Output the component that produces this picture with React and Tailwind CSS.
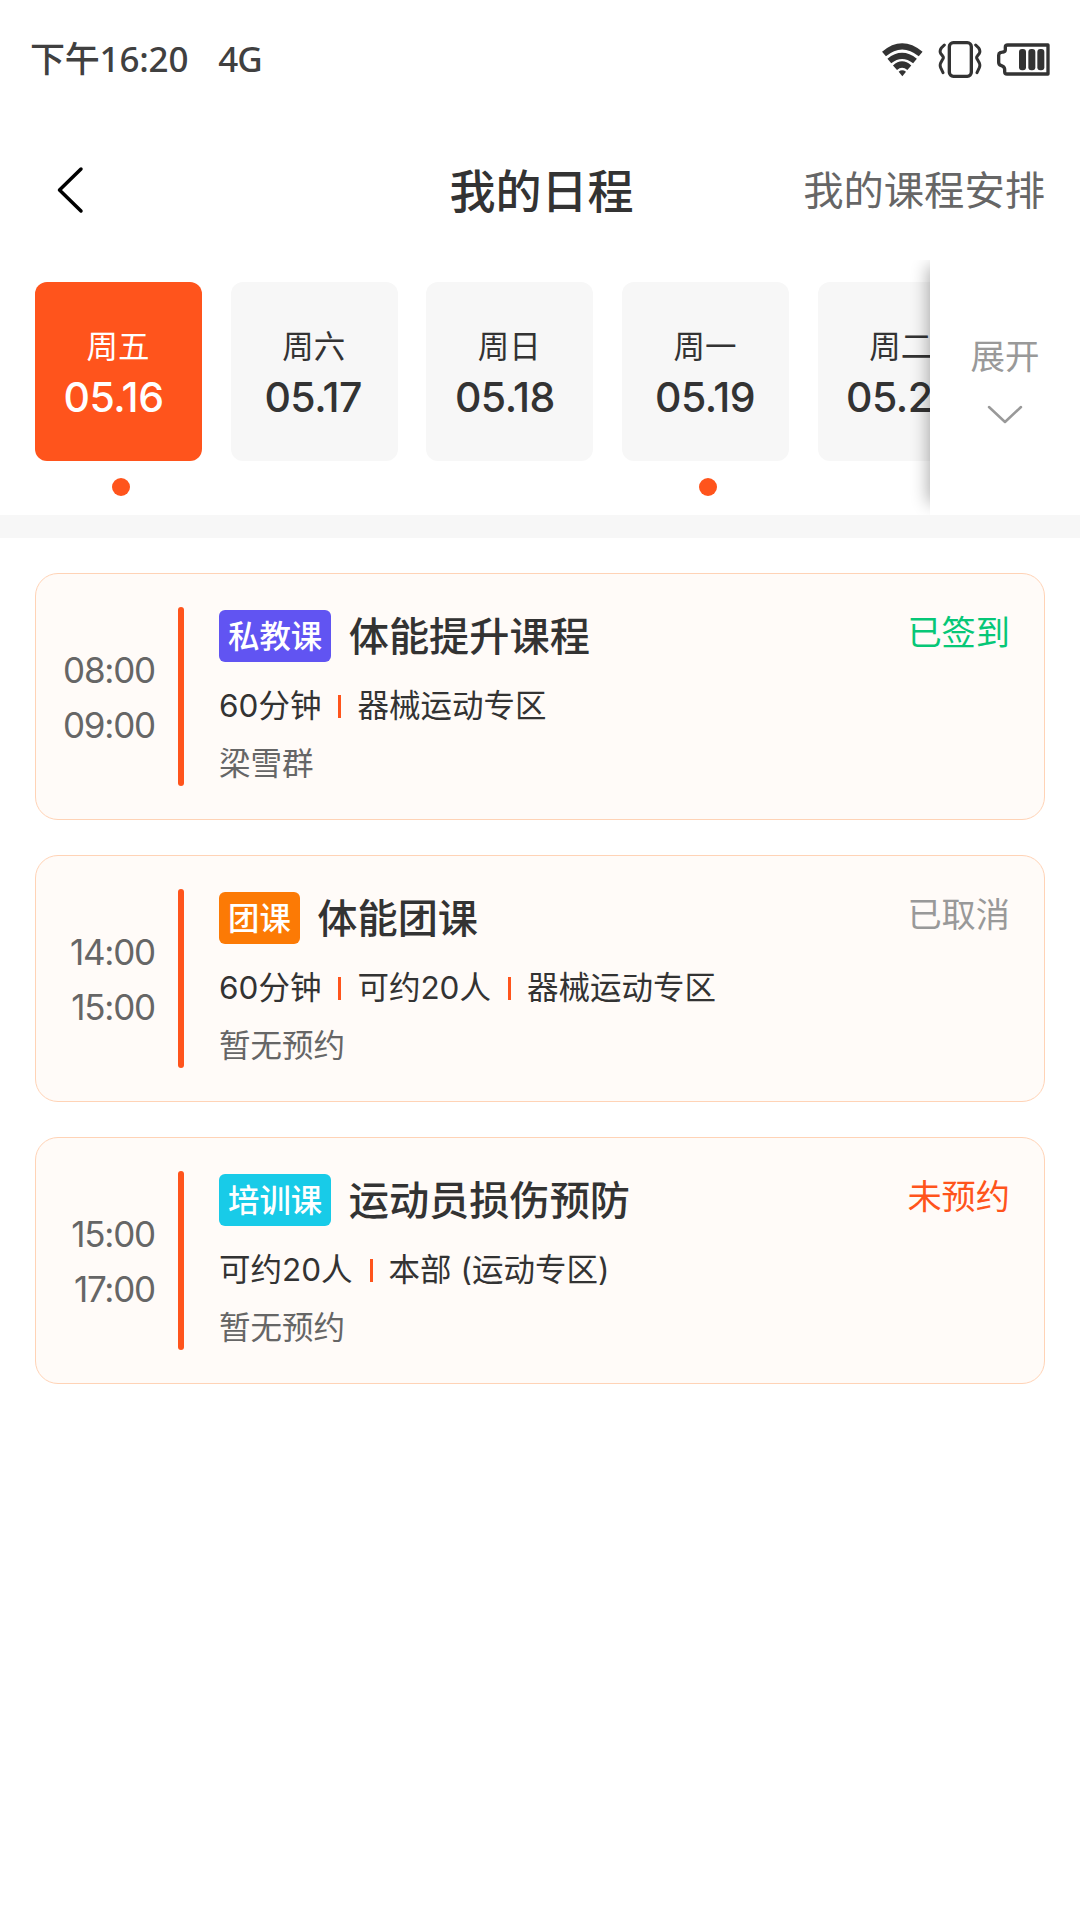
import React, { useState } from 'react';
import clsx from 'clsx';

const days = [
    { week: '周五', date: '05.16', dot: true, dateClass: 'pr-2.5' },
    { week: '周六', date: '05.17', dot: false, dateClass: 'pr-0.5' },
    { week: '周日', date: '05.18', dot: false, dateClass: 'pr-2.5' },
    { week: '周一', date: '05.19', dot: true, dateClass: 'pr-px' },
    { week: '周二', date: '05.20', dot: false, dateClass: 'pl-0.5' },
];

const courses = [
    {
        start: '08:00',
        end: '09:00',
        tag: '私教课',
        tagClass: 'bg-[#6154f2]',
        title: '体能提升课程',
        info: ['60分钟', '器械运动专区'],
        member: '梁雪群',
        status: '已签到',
        statusClass: 'text-[#07c777]',
    },
    {
        start: '14:00',
        end: '15:00',
        tag: '团课',
        tagClass: 'bg-[#fc7a05]',
        title: '体能团课',
        info: ['60分钟', '可约20人', '器械运动专区'],
        member: '暂无预约',
        status: '已取消',
        statusClass: 'text-[#999999]',
    },
    {
        start: '15:00',
        end: '17:00',
        tag: '培训课',
        tagClass: 'bg-[#18cbe8]',
        title: '运动员损伤预防',
        info: ['可约20人', '本部 (运动专区)'],
        member: '暂无预约',
        status: '未预约',
        statusClass: 'text-[#ff541c]',
    },
];

function WifiIcon() {
    return (
        <svg width="41" height="34" viewBox="0 0 123 102" fill="none" stroke="#333" strokeWidth="18">
            <path d="M6 33 Q60 -13 116 33" />
            <path d="M22 54 Q60 23 99 54" />
            <path d="M39 74 Q60 55 82 74" />
            <path d="M50 86 Q60 78 72 86 L61 100 Z" fill="#333" stroke="none" />
        </svg>
    );
}

function VibrateIcon() {
    return (
        <svg width="44" height="37" viewBox="0 0 132 111" fill="none" stroke="#333" strokeWidth="9" strokeLinecap="round">
            <rect x="34" y="5" width="66" height="101" rx="12" strokeWidth="10" />
            <path d="M19 12 L10 21 Q4 29 8 37 L14 45 Q18 50 14 55 L8 66 Q5 73 8 80 L15 95" />
            <path d="M113 12 L122 21 Q128 29 124 37 L118 45 Q114 50 118 55 L124 66 Q127 73 124 80 L117 95" />
        </svg>
    );
}

function BatteryIcon() {
    return (
        <svg width="53" height="33" viewBox="0 0 159 99" fill="none" stroke="#333" strokeWidth="10" strokeLinejoin="round">
            <path d="M153 6 H32 Q25 6 25 12 V20 Q25 26 18 27 L10 29 Q5 31 5 37 V58 Q5 65 11 67 L17 70 Q23 73 23 80 V86 Q23 93 30 93 H153 Z" />
            <g fill="#333" stroke="none">
                <rect x="66" y="18" width="21" height="64" rx="9" />
                <rect x="94" y="18" width="21" height="64" rx="9" />
                <rect x="121" y="18" width="21" height="64" rx="9" />
            </g>
        </svg>
    );
}

function StatusBar() {
    return (
        <div className="flex h-[119px] items-center justify-between pl-[30px] pr-[30px] font-['Noto_Sans','Noto_Sans_CJK_SC',sans-serif] text-[35px] leading-none font-medium text-[#404040]">
            <div className="flex gap-[30px] pb-[3px]">
                <span className="tracking-[-0.2px]">下午16:20</span>
                <span className="tracking-[-1px]">4G</span>
            </div>
            <div className="flex items-center gap-[15px]">
                <WifiIcon />
                <VibrateIcon />
                <BatteryIcon />
            </div>
        </div>
    );
}

function CourseCard({ course }) {
    return (
        <div className="flex h-[247px] rounded-[23px] border border-[#ffd3b6] bg-[#fffbf8] pt-[33px] pr-[34px]">
            {/* Time range */}
            <div className="flex w-[119px] flex-col items-end pt-[36px] text-[35px] leading-[55px] tracking-[-1.2px] text-[#666666]">
                <span>{course.start}</span>
                <span>{course.end}</span>
            </div>
            <div className="ml-[23px] h-[179px] w-1.5 rounded-full bg-[#ff541c]" />

            {/* Course info */}
            <div className="ml-[35px] flex-1 pt-[3px]">
                <div className="flex h-[52px] items-center">
                    <span className={clsx('flex h-[52px] items-center rounded-[6px] px-[9px] pt-[3px] text-[31.4px] font-medium text-white', course.tagClass)}>
                        {course.tag}
                    </span>
                    <span className="ml-[17.5px] pt-0.5 text-[40.2px] leading-[52px] font-medium text-[#333333]">{course.title}</span>
                </div>
                <div className="mt-[22px] flex h-[44px] items-center text-[31.5px] leading-[44px] text-[#333333]">
                    {course.info.map((text, i) => (
                        <React.Fragment key={text}>
                            {i > 0 && <span className="mr-[16px] ml-[17px] h-[23px] w-[3px] bg-[#ff541c]" />}
                            <span>{text}</span>
                        </React.Fragment>
                    ))}
                </div>
                <div className="mt-[14px] text-[31.5px] leading-[44px] text-[#666666]">{course.member}</div>
            </div>

            <div className={clsx('pt-px text-[34.2px] leading-[50px]', course.statusClass)}>{course.status}</div>
        </div>
    );
}

export default function App() {
    const [active, setActive] = useState(0);

    return (
        <div className="h-[1920px] w-[1080px] overflow-hidden bg-white font-['Inter','Noto_Sans_CJK_SC',sans-serif]">
            <StatusBar />

            {/* Header */}
            <header className="grid h-[141px] grid-cols-[1fr_auto_1fr] items-center pt-px pl-[56px] pr-[35px]">
                <svg width="30" height="48" viewBox="0 0 30 48" fill="none" stroke="#000" strokeWidth="3.5" strokeLinecap="round" strokeLinejoin="round">
                    <path d="M25 3 L3.5 24 L25 45" />
                </svg>
                <h1 className="pt-0.5 pr-[18px] text-[46px] leading-none font-medium text-[#333333]">我的日程</h1>
                <span className="pt-0.5 text-right text-[40.3px] leading-none text-[#666666]">我的课程安排</span>
            </header>

            {/* Day picker */}
            <div className="flex h-[255px] overflow-hidden">
                <div className="flex w-[930px] gap-[28.7px] overflow-hidden pt-[22px] pl-[35px]">
                    {days.map((day, i) => (
                        <div key={day.date} className="flex shrink-0 flex-col items-center">
                            <button
                                type="button"
                                onClick={() => setActive(i)}
                                className={clsx(
                                    'flex h-[179px] w-[167px] flex-col items-center rounded-[12px] pt-[39px]',
                                    active === i ? 'bg-[#ff541c] text-white' : 'bg-[#f7f7f7] text-[#333333]'
                                )}
                            >
                                <span className="pr-px text-[31.5px] leading-[51px]">{day.week}</span>
                                <span className={clsx('text-[41px] leading-[51px] font-medium tracking-[-0.5px]', day.dateClass)}>{day.date}</span>
                            </button>
                            {day.dot && <span className="mt-[17px] ml-[5px] size-[18px] rounded-full bg-[#ff541c]" />}
                        </div>
                    ))}
                </div>
                <div className="z-10 flex w-[150px] flex-col items-center bg-white pt-[74px] shadow-[-11px_-3px_16px_-9px_rgba(0,0,0,0.32)]">
                    <span className="text-[34.5px] leading-[46px] text-[#999999]">展开</span>
                    <svg className="mt-[24px]" width="38" height="22" viewBox="0 0 38 22" fill="none" stroke="#999" strokeWidth="2.5" strokeLinecap="round" strokeLinejoin="round">
                        <path d="M3 3 L19 18 L35 3" />
                    </svg>
                </div>
            </div>
            <div className="h-[23px] bg-[#f7f7f7]" />

            {/* Course list */}
            <main className="flex flex-col gap-[35px] px-[35px] pt-[35px]">
                {courses.map((course) => (
                    <CourseCard key={course.title} course={course} />
                ))}
            </main>
        </div>
    );
}
